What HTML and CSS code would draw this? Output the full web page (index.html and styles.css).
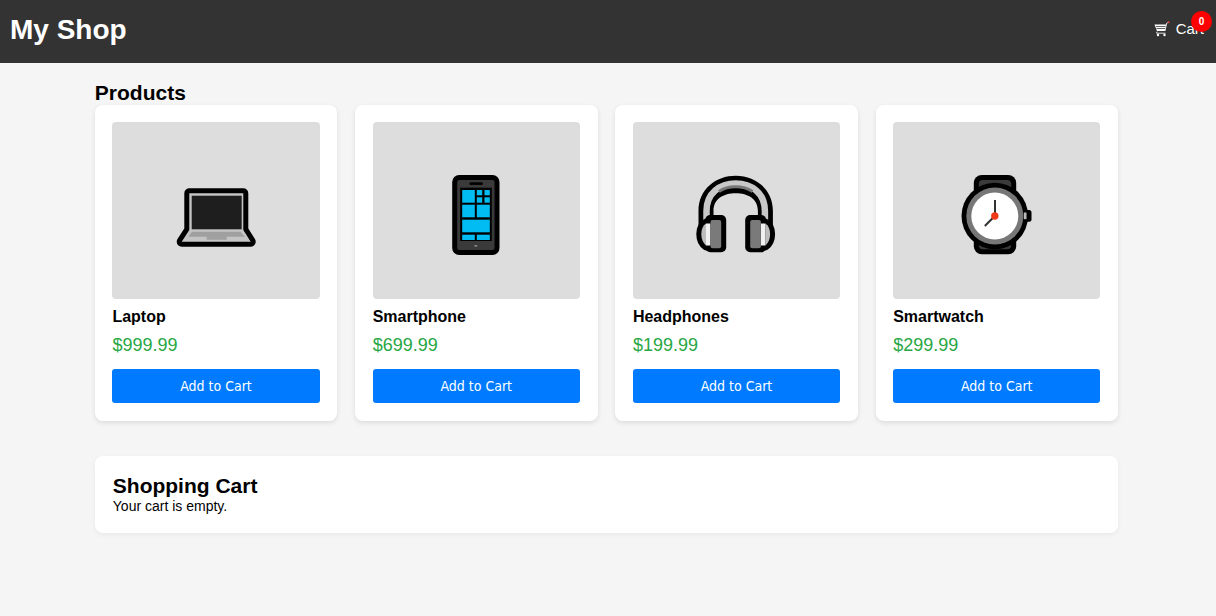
FILE: index.html
```html
<!DOCTYPE html>
<html lang="en">
<head>
<meta charset="utf-8">
<title>My Shop</title>
<link rel="stylesheet" href="styles.css">
</head>
<body>
<header class="topbar">
  <h1 class="brand">My Shop</h1>
  <div class="cart-link">
    <svg class="cart-icon" viewBox="0 0 16 16" width="16" height="16" aria-hidden="true">
      <path d="M0.5 3.5H12.5L11 10H3z" fill="#fff"/>
      <path d="M2 5.500H12M2.500 7.500H11.500" stroke="#666" stroke-width="1" fill="none"/>
      <path d="M3 10.500L2.600 12.200H11.500M11 10L12.600 2.200L14.400 1.400" stroke="#ddd" stroke-width="1" fill="none"/>
      <circle cx="4" cy="14" r="1.200" fill="#fff"/>
      <circle cx="10.500" cy="14" r="1.200" fill="#fff"/>
      <circle cx="14.600" cy="1.200" r="1" fill="#e0452c"/>
    </svg>
    <span>Cart</span>
    <span class="badge">0</span>
  </div>
</header>
<main class="page">
  <h2 class="section-title">Products</h2>
  <div class="product-grid">
    <article class="card">
      <div class="thumb">
        <svg viewBox="0 0 80 80" width="80" height="80" aria-hidden="true">
          <path d="M13.300 18.300H67.300V55L74.700 66.700H5.700L13.300 55z" fill="#c4c4c4" stroke="#000" stroke-width="10" stroke-linejoin="round"/>
          <path d="M13.300 18.300H67.300V55L74.700 66.700H5.700L13.300 55z" fill="#c4c4c4"/>
          <rect x="15.700" y="20.700" width="50" height="33.600" fill="#1e1e1e"/>
          <path d="M16 56.700H64.500L69 61.700H50.700V64.700H30.700V61.700H12.300z" fill="#a0a0a0"/>
        </svg>
      </div>
      <h3 class="name">Laptop</h3>
      <p class="price">$999.99</p>
      <button class="add" type="button">Add to Cart</button>
    </article>
    <article class="card">
      <div class="thumb">
        <svg viewBox="0 0 80 80" width="80" height="80" aria-hidden="true">
          <rect x="16.200" y="0" width="47.300" height="80" rx="7" fill="#000"/>
          <rect x="21.200" y="5" width="37.300" height="70" rx="2" fill="#3a3a3a"/>
          <rect x="33.500" y="7.300" width="13.300" height="2.700" rx="1" fill="#000"/>
          <rect x="24.200" y="12.700" width="31.600" height="53.300" fill="#000"/>
          <g fill="#00bcf2">
            <rect x="26.200" y="15" width="12.600" height="12.700"/>
            <rect x="40.800" y="15" width="5.400" height="5.300"/>
            <rect x="48.500" y="15" width="5.300" height="5.300"/>
            <rect x="40.800" y="22.300" width="5.400" height="5.400"/>
            <rect x="48.500" y="22.300" width="5.300" height="5.400"/>
            <rect x="26.200" y="29.700" width="12.600" height="12.600"/>
            <rect x="40.800" y="29.700" width="13" height="12.600"/>
            <rect x="26.200" y="44.700" width="27.600" height="12.600"/>
            <rect x="26.200" y="59.700" width="12.600" height="5.300"/>
            <rect x="40.800" y="59.700" width="13" height="5.300"/>
          </g>
          <rect x="38.500" y="70" width="2.700" height="1.700" fill="#888"/>
        </svg>
      </div>
      <h3 class="name">Smartphone</h3>
      <p class="price">$699.99</p>
      <button class="add" type="button">Add to Cart</button>
    </article>
    <article class="card">
      <div class="thumb">
        <svg viewBox="0 0 80 80" width="80" height="80" aria-hidden="true">
          <path d="M2.500 50V36C2.500 14 20 0.700 39.700 0.700S76.900 14 76.900 36V50H61.900V36C61.900 24 52 18.300 39.700 18.300S17.500 24 17.500 36V50z" fill="#000"/>
          <path d="M10.500 48V36C10.500 18 24 8.500 39.700 8.500S68.900 18 68.900 36V48" fill="none" stroke="#c8c8c8" stroke-width="6.500"/>
          <path d="M23 16.500C28 13 33 11.800 39.700 11.800S51 13 56.500 16.500" fill="none" stroke="#777" stroke-width="3"/>
          <g id="cup">
            <path d="M14.500 48.500H10.500C7 50.500 5.300 54.500 5.300 59C5.300 64 7 68 10.500 70.500H14.500z" fill="#000" stroke="#000" stroke-width="10" stroke-linejoin="round"/>
            <rect x="9.200" y="40" width="21" height="37.300" rx="5" fill="#000"/>
            <path d="M10 48.500C7 50.500 5.300 54.500 5.300 59C5.300 64 7 68 10 70.500z" fill="#bdbdbd"/>
            <rect x="10" y="48.500" width="4.500" height="22" fill="#f0f0f0"/>
            <rect x="14.500" y="45" width="10.700" height="28.300" rx="2" fill="#7a7a7a"/>
          </g>
          <use href="#cup" transform="translate(79.400 0) scale(-1 1)"/>
        </svg>
      </div>
      <h3 class="name">Headphones</h3>
      <p class="price">$199.99</p>
      <button class="add" type="button">Add to Cart</button>
    </article>
    <article class="card">
      <div class="thumb">
        <svg viewBox="0 0 80 80" width="80" height="80" aria-hidden="true">
          <rect x="16.800" y="0" width="42.400" height="79.300" rx="8" fill="#000"/>
          <rect x="21.800" y="5" width="32.400" height="69.300" rx="4" fill="#3a3a3a"/>
          <rect x="66.800" y="35" width="7.700" height="11.700" rx="2.500" fill="#000"/>
          <circle cx="37.800" cy="41" r="33.300" fill="#000"/>
          <rect x="66.800" y="37.500" width="2.700" height="6.700" fill="#bbb"/>
          <circle cx="37.800" cy="41" r="28.500" fill="#777"/>
          <circle cx="37.800" cy="41" r="23.500" fill="#fff"/>
          <path d="M38 41V25M37.800 41L27.800 51" stroke="#333" stroke-width="2" fill="none"/>
          <circle cx="37.800" cy="41" r="3.700" fill="#f03a17"/>
        </svg>
      </div>
      <h3 class="name">Smartwatch</h3>
      <p class="price">$299.99</p>
      <button class="add" type="button">Add to Cart</button>
    </article>
  </div>
  <section class="cart-panel">
    <h2 class="section-title">Shopping Cart</h2>
    <p class="empty">Your cart is empty.</p>
  </section>
</main>
</body>
</html>
```
FILE: styles.css
```css
* { box-sizing: border-box; }

html, body { margin: 0; padding: 0; }

body {
  background: #f5f5f5;
  color: #000;
  font-family: "Liberation Sans", Arial, sans-serif;
  font-size: 14px;
  min-height: 616px;
}

.topbar {
  height: 63px;
  background: #333;
  color: #fff;
  display: flex;
  align-items: center;
  justify-content: space-between;
  padding: 0 12px 4px 10px;
}

.brand {
  margin: 0;
  font-size: 28px;
  line-height: 32px;
  font-weight: 700;
}

.cart-link {
  position: relative;
  display: flex;
  align-items: center;
  gap: 6px;
  padding-bottom: 2px;
  font-size: 15px;
}

.cart-icon { display: block; margin-top: 1px; }

.badge {
  position: absolute;
  top: -9px;
  right: -8px;
  width: 21px;
  height: 21px;
  border-radius: 50%;
  background: #f00;
  color: #fff;
  font-size: 10px;
  font-weight: 700;
  display: flex;
  align-items: center;
  justify-content: center;
}

.page { padding: 18px 97.8px 0 94.8px; }

.section-title {
  margin: 0;
  font-size: 21px;
  line-height: 24px;
  font-weight: 700;
}

.product-grid {
  display: grid;
  grid-template-columns: repeat(4, 1fr);
  gap: 17.6px;
}

.card {
  background: #fff;
  border-radius: 8px;
  box-shadow: 0 2px 5px rgba(0, 0, 0, 0.1);
  padding: 17px 17.9px 18px 17.6px;
}

.thumb {
  height: 177px;
  padding-top: 9px;
  background: #ddd;
  border-radius: 4px;
  display: flex;
  align-items: center;
  justify-content: center;
}

.name {
  margin: 9px 0 0;
  font-size: 16px;
  line-height: 18px;
  font-weight: 700;
}

.price {
  margin: 9px 0 0;
  font-size: 18px;
  line-height: 21px;
  color: #28a745;
}

.add {
  display: block;
  width: 100%;
  height: 34px;
  margin-top: 13px;
  border: 0;
  border-radius: 3px;
  background: #007bff;
  color: #fff;
  font-family: "DejaVu Sans Condensed", "DejaVu Sans", sans-serif;
  font-stretch: condensed;
  font-size: 14px;
}

.cart-panel {
  margin-top: 35px;
  height: 77px;
  padding: 18px;
  background: #fff;
  border-radius: 8px;
  box-shadow: 0 2px 5px rgba(0, 0, 0, 0.05);
}

.empty { margin: 0; line-height: 16px; }
```
